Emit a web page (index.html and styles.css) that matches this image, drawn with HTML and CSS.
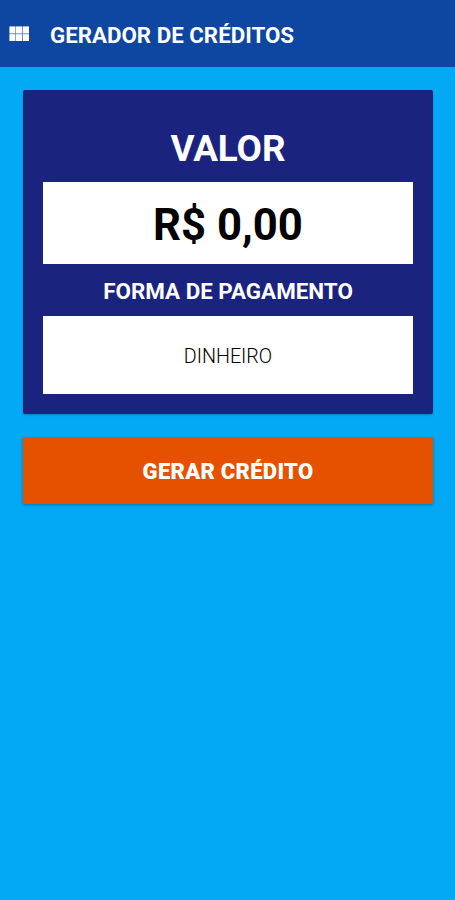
FILE: index.html
```html
<!DOCTYPE html>
<html lang="pt-BR">
<head>
<meta charset="utf-8">
<title>Gerador de Créditos</title>
<link rel="stylesheet" href="styles.css">
</head>
<body>
<header class="navbar">
  <svg class="menu-icon" viewBox="0 0 20 16" aria-hidden="true"><path class="icon-base" d="M.5 .5h19.5v14.5H.5z"/><path d="M.5 .5h5.7v6.8H.5zM7 .5h6v6.8H7zM14 .5h6v6.8h-6zM.5 8.2h5.7V15H.5zM7 8.2h6V15H7zM14 8.2h6V15h-6z"/></svg>
  <h1 class="title">GERADOR DE CRÉDITOS</h1>
</header>
<main class="content">
  <section class="card">
    <h2 class="label-value">VALOR</h2>
    <div class="amount">R$ 0,00</div>
    <h3 class="label-payment">FORMA DE PAGAMENTO</h3>
    <div class="payment">DINHEIRO</div>
  </section>
  <button class="submit">GERAR CRÉDITO</button>
</main>
</body>
</html>
```
FILE: styles.css
```css
* { box-sizing: border-box; }
body { margin: 0; min-height: 900px; background: #03a9f4; font-family: Roboto, sans-serif; }
.navbar { height: 67px; display: flex; align-items: center; background: #0d47a1; padding: 2px 0 0 9px; }
.menu-icon { width: 20px; height: 16px; margin-top: -1px; fill: #fff; flex: none; }
.icon-base { fill: #6f8fc8; }
.title { margin: 0 0 0 21px; color: #fff; font-size: 22.3px; font-weight: 700; white-space: nowrap; }
.content { padding: 23px 22px 0 23px; }
.card { height: 324px; padding: 36px 20px 0; background: #1a237e; border-radius: 2px; box-shadow: 0 1px 2px rgba(0,0,0,.24); text-align: center; }
.label-value { margin: 0; height: 56px; line-height: 46px; color: #fff; font-size: 36.8px; font-weight: 700; }
.amount { height: 82px; line-height: 87px; background: #fff; color: #000; font-size: 43.7px; font-weight: 700; }
.label-payment { margin: 0; height: 52px; line-height: 54px; color: #fff; font-size: 22.4px; font-weight: 700; }
.payment { height: 78px; line-height: 81px; background: #fff; color: #000; font-size: 19.7px; font-weight: 300; }
.submit { display: block; width: 100%; height: 67px; margin-top: 23px; padding: 2px 0 0; border: 0; border-radius: 1px; background: #e65100; color: #fff; font: 900 22px Roboto, sans-serif; letter-spacing: .3px; box-shadow: 0 1px 3px rgba(0,0,0,.3); }
```
